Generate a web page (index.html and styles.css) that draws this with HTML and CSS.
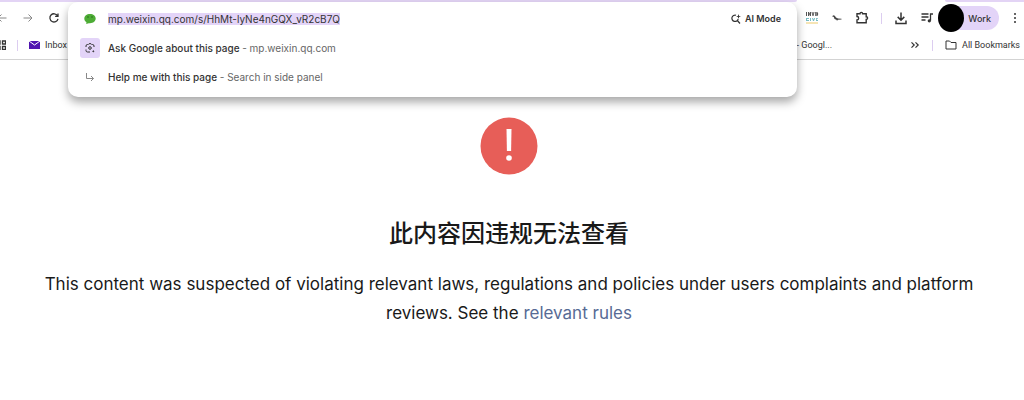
FILE: index.html
```html
<!DOCTYPE html>
<html lang="zh-CN">
<head>
    <meta charset="UTF-8">
    <meta name="viewport" content="width=device-width, initial-scale=1.0">
    <title>此内容因违规无法查看</title>
    <link rel="stylesheet" href="styles.css">
</head>
<body>
    <header class="browser">
        <div class="tab-strip">
            <div class="tab-edge tab-edge-left"></div>
            <div class="tab-edge tab-edge-right"></div>
        </div>
        <div class="toolbar">
            <nav class="nav-buttons">
                <button type="button" class="icon-button faded" aria-label="Back">
                    <svg viewBox="0 0 12 12" width="12" height="12"><path d="M10.500 6H2M5.500 2.500L2 6l3.500 3.500"/></svg>
                </button>
                <button type="button" class="icon-button faded" aria-label="Forward">
                    <svg viewBox="0 0 12 12" width="12" height="12"><path d="M1.500 6H10M6.500 2.500L10 6 6.500 9.500"/></svg>
                </button>
                <button type="button" class="icon-button" aria-label="Reload">
                    <svg viewBox="0 0 12 12" width="12" height="12" stroke-width="1.300"><path d="M9.500 3.700A4.100 4.100 0 1 0 10 6.800M10 1.500v2.900H7.100"/></svg>
                </button>
            </nav>
            <div class="tools">
                <button type="button" class="icon-button" aria-label="InVID">
                    <svg class="solid" viewBox="0 0 14 14" width="14" height="14">
                        <path d="M1 1h1v4H1zM3 1h1l1 2V1h1v4H5L4 3v2H3zM6.500 1h1l.5 2.500L8.500 1h1l-1 4h-1zM10 1h.8v4H10zM11.300 1h.7c1.600 0 1.600 4 0 4h-.7z" fill="#555"/>
                        <path d="M1 7h3v1H2v1h2v1H1zM5 7h1v3H5zM7 7h1l.6 1.500L9.200 7h1l-1.200 3h-1zM11 7h2v.8h-1.200V9H13v1h-2z" fill="#79bdc4"/>
                        <path d="M1 11.500h12v1H1z" fill="#eccb6b"/>
                    </svg>
                </button>
                <button type="button" class="icon-button" aria-label="Bird extension">
                    <svg class="solid" viewBox="0 0 12 12" width="12" height="12"><path d="M1 4.300L2.500 3.300l1.300.5L5 5.500l2 1 3.500.3v.8L7 7.700l-1 1-.6-1L3.500 7 2.800 5z" fill="#444"/></svg>
                </button>
                <button type="button" class="icon-button" aria-label="Extensions">
                    <svg viewBox="0 0 14 14" width="14" height="14" stroke-width="1.400"><path d="M2 2.700h3a1.300 1.300 0 0 1 2.600 0h3.600v3a1.300 1.300 0 0 1 0 2.800v3.200H2V9c2.200 0 2.200-3.500 0-3.500z"/></svg>
                </button>
                <span class="divider"></span>
                <button type="button" class="icon-button" aria-label="Downloads">
                    <svg viewBox="0 0 14 14" width="14" height="14" stroke-width="1.500"><path d="M7 1.500v7.500M3.700 5.900L7 9.200l3.300-3.300M2 9.500v3h10v-3"/></svg>
                </button>
                <button type="button" class="icon-button media-button" aria-label="Media">
                    <svg viewBox="0 0 14 14" width="14" height="14" stroke-width="1.300"><path d="M1.500 3h7M1.500 6h7M1.500 9h4M10.500 9.500V3H13"/><circle cx="9.300" cy="9.800" r="1" fill="#333"/></svg>
                </button>
                <button type="button" class="profile"><span class="avatar"></span>Work</button>
                <button type="button" class="icon-button" aria-label="Menu">
                    <svg class="solid" viewBox="0 0 4 12" width="4" height="12"><g fill="#333"><circle cx="2" cy="2" r="1"/><circle cx="2" cy="6" r="1"/><circle cx="2" cy="10" r="1"/></g></svg>
                </button>
            </div>
        </div>
        <div class="bookmarks">
            <button type="button" class="icon-button" aria-label="Apps">
                <svg viewBox="0 0 10 10" width="10" height="10" stroke-width="1.300"><path d="M1 1h3v3H1zM6.500 1h3v3h-3zM1 6.500h3v3H1zM6.500 6.500h3v3h-3z"/></svg>
            </button>
            <span class="divider"></span>
            <a class="bookmark" href="#">
                <svg class="solid" viewBox="0 0 11 8" width="11" height="8"><path d="M0 0h11v8H0z" fill="#5015b0"/><path d="M0 0l5.500 4L11 0" fill="none" stroke="#fff"/></svg>
                Inbox
            </a>
            <div class="bookmarks-end">
                <a class="bookmark bookmark-last" href="#">- Googl...</a>
                <button type="button" class="icon-button" aria-label="More bookmarks">
                    <svg viewBox="0 0 10 10" width="10" height="10" stroke-width="1.200"><path d="M1.500 2.300L4.200 5 1.500 7.700M5.500 2.300L8.200 5 5.500 7.700"/></svg>
                </button>
                <span class="divider"></span>
                <a class="bookmark" href="#">
                    <svg viewBox="0 0 12 10" width="12" height="10"><path d="M1 1h3.500l1.500 1.500h5V9H1z"/></svg>
                    All Bookmarks
                </a>
            </div>
        </div>
        <div class="omnibox">
            <div class="omnibox-row">
                <span class="row-icon">
                    <svg class="solid" viewBox="0 0 12 12" width="12" height="12"><path d="M6 1c3.300 0 5.700 2 5.700 4.600S9.300 10.300 6 10.300l-1.200-.1L2.200 11l.3-1.600C1.100 8.500.3 7.200.3 5.600.3 3 2.700 1 6 1z" fill="#4dac35"/><circle cx="4" cy="4" r=".8" fill="#286b1d"/><circle cx="8" cy="4" r=".8" fill="#286b1d"/></svg>
                </span>
                <span class="url">mp.weixin.qq.com/s/HhMt-lyNe4nGQX_vR2cB7Q</span>
                <button type="button" class="ai-mode">
                    <svg viewBox="0 0 12 12" width="12" height="12" stroke-width="1.200"><path d="M6 2.200A3.200 3.200 0 1 0 8.200 6M7.300 7.500L10 10.500"/><path class="solid" d="M8.500 1l.6 1.900 1.900.6-1.900.6-.6 1.900-.6-1.900L6 3.500l1.900-.6z" fill="#333"/></svg>
                    AI Mode
                </button>
            </div>
            <a class="omnibox-row suggestion" href="#">
                <span class="row-icon lens">
                    <svg viewBox="0 0 12 12" width="12" height="12"><path d="M2 5V4a1.500 1.500 0 0 1 1.500-1.500h.8L5 1.700h2l.7.8h.8A1.500 1.500 0 0 1 10 4v1M2 7.500v1A1.500 1.500 0 0 0 3.500 10H6"/><circle cx="6" cy="6" r="1.300"/><circle cx="9.300" cy="9.300" r=".5" fill="#333"/></svg>
                </span>
                <span>Ask Google about this page <span class="hint">- mp.weixin.qq.com</span></span>
            </a>
            <a class="omnibox-row suggestion" href="#">
                <span class="row-icon faded">
                    <svg viewBox="0 0 10 10" width="10" height="10"><path d="M1.500 1v5.500H8.500M6 4l2.500 2.500L6 9"/></svg>
                </span>
                <span>Help me with this page <span class="hint">- Search in side panel</span></span>
            </a>
        </div>
    </header>
    <main class="message">
        <svg viewBox="0 0 58 58" width="58" height="58"><circle cx="29" cy="29" r="28.500" fill="#e75e58"/><path d="M26.500 12h5l-.4 22h-4.200z" fill="#fff"/><circle cx="29" cy="41" r="2.800" fill="#fff"/></svg>
        <h1>此内容因违规无法查看</h1>
        <p>This content was suspected of violating relevant laws, regulations and policies under users complaints and platform reviews. See the <a href="#">relevant rules</a></p>
    </main>
</body>
</html>
```
FILE: styles.css
```css
* {
    box-sizing: border-box;
}
body {
    margin: 0;
    background-color: #fff;
    color: #191919;
    font-family: Inter, "Noto Sans CJK SC", sans-serif;
}
button {
    padding: 0;
    border: none;
    background: none;
    color: inherit;
    font: inherit;
    cursor: pointer;
}
a {
    color: inherit;
    text-decoration: none;
}
svg {
    display: block;
    flex-shrink: 0;
}
.browser {
    position: relative;
    height: 60px;
    border-bottom: 1px solid #d3d3d3;
    color: #333;
    font-size: 9px;
}
.browser svg {
    fill: none;
    stroke: #333;
}
.browser .solid {
    stroke: none;
}
.browser .faded svg {
    stroke: #888;
}
.tab-strip {
    display: flex;
    gap: 148px;
    height: 2px;
}
.tab-edge {
    background-color: #e3d4f5;
}
.tab-edge-left {
    flex: 1;
    border-bottom-right-radius: 2px;
}
.tab-edge-right {
    width: 79px;
    border-bottom-left-radius: 2px;
}
.toolbar {
    display: flex;
    justify-content: space-between;
    align-items: center;
    height: 32px;
    padding-right: 7px;
}
.nav-buttons,
.tools {
    display: flex;
    align-items: center;
}
.nav-buttons {
    gap: 14px;
    margin-left: -4px;
}
.tools {
    gap: 12px;
}
.icon-button {
    display: flex;
    align-items: center;
    justify-content: center;
}
.media-button {
    margin-right: -8px;
}
.divider {
    width: 1px;
    height: 11px;
    background-color: #dccdf0;
}
.profile {
    display: flex;
    align-items: center;
    gap: 4px;
    height: 24px;
    margin-right: 2px;
    padding-right: 8px;
    border-radius: 12px;
    background-color: #e3d4f8;
    font-size: 9px;
    font-weight: 500;
}
.avatar {
    width: 26px;
    height: 28px;
    border-radius: 50%;
    background-color: #000;
}
.bookmarks {
    display: flex;
    align-items: center;
    gap: 11px;
    height: 22px;
    margin-left: -4px;
    font-family: Roboto, sans-serif;
}
.bookmark {
    display: flex;
    align-items: center;
    gap: 5px;
    white-space: nowrap;
}
.bookmarks-end {
    display: flex;
    align-items: center;
    gap: 12px;
    margin-left: auto;
    padding-right: 4px;
}
.bookmark-last {
    margin-right: 66px;
}
.omnibox {
    position: absolute;
    top: 2px;
    left: 68px;
    right: 227px;
    z-index: 1;
    padding: 2px 12px 6px;
    border-radius: 10px;
    background-color: #fff;
    box-shadow: 0 5px 10px rgba(0, 0, 0, 0.35);
    font-size: 10px;
}
.omnibox-row {
    display: flex;
    align-items: center;
    gap: 8px;
    height: 29px;
}
.row-icon {
    display: flex;
    align-items: center;
    justify-content: center;
    width: 20px;
    height: 20px;
}
.lens {
    border-radius: 3px;
    background-color: #e3d4f8;
}
.url {
    background-color: #e3d4f8;
}
.hint {
    color: #666;
}
.suggestion {
    font-weight: 500;
}
.suggestion .hint {
    font-weight: 400;
}
.ai-mode {
    display: flex;
    align-items: center;
    gap: 3px;
    margin-left: auto;
    padding-right: 4px;
    font-size: 9px;
    font-weight: 600;
}
.message {
    display: flex;
    flex-direction: column;
    align-items: center;
    padding: 57px 38px 40px 32px;
    text-align: center;
}
h1 {
    margin: 41px 0 0;
    font-size: 24px;
    font-weight: 500;
    line-height: 36px;
}
p {
    margin: 18px 0 0;
    font-size: 17px;
    line-height: 29px;
}
p a {
    color: #576b95;
}
```
